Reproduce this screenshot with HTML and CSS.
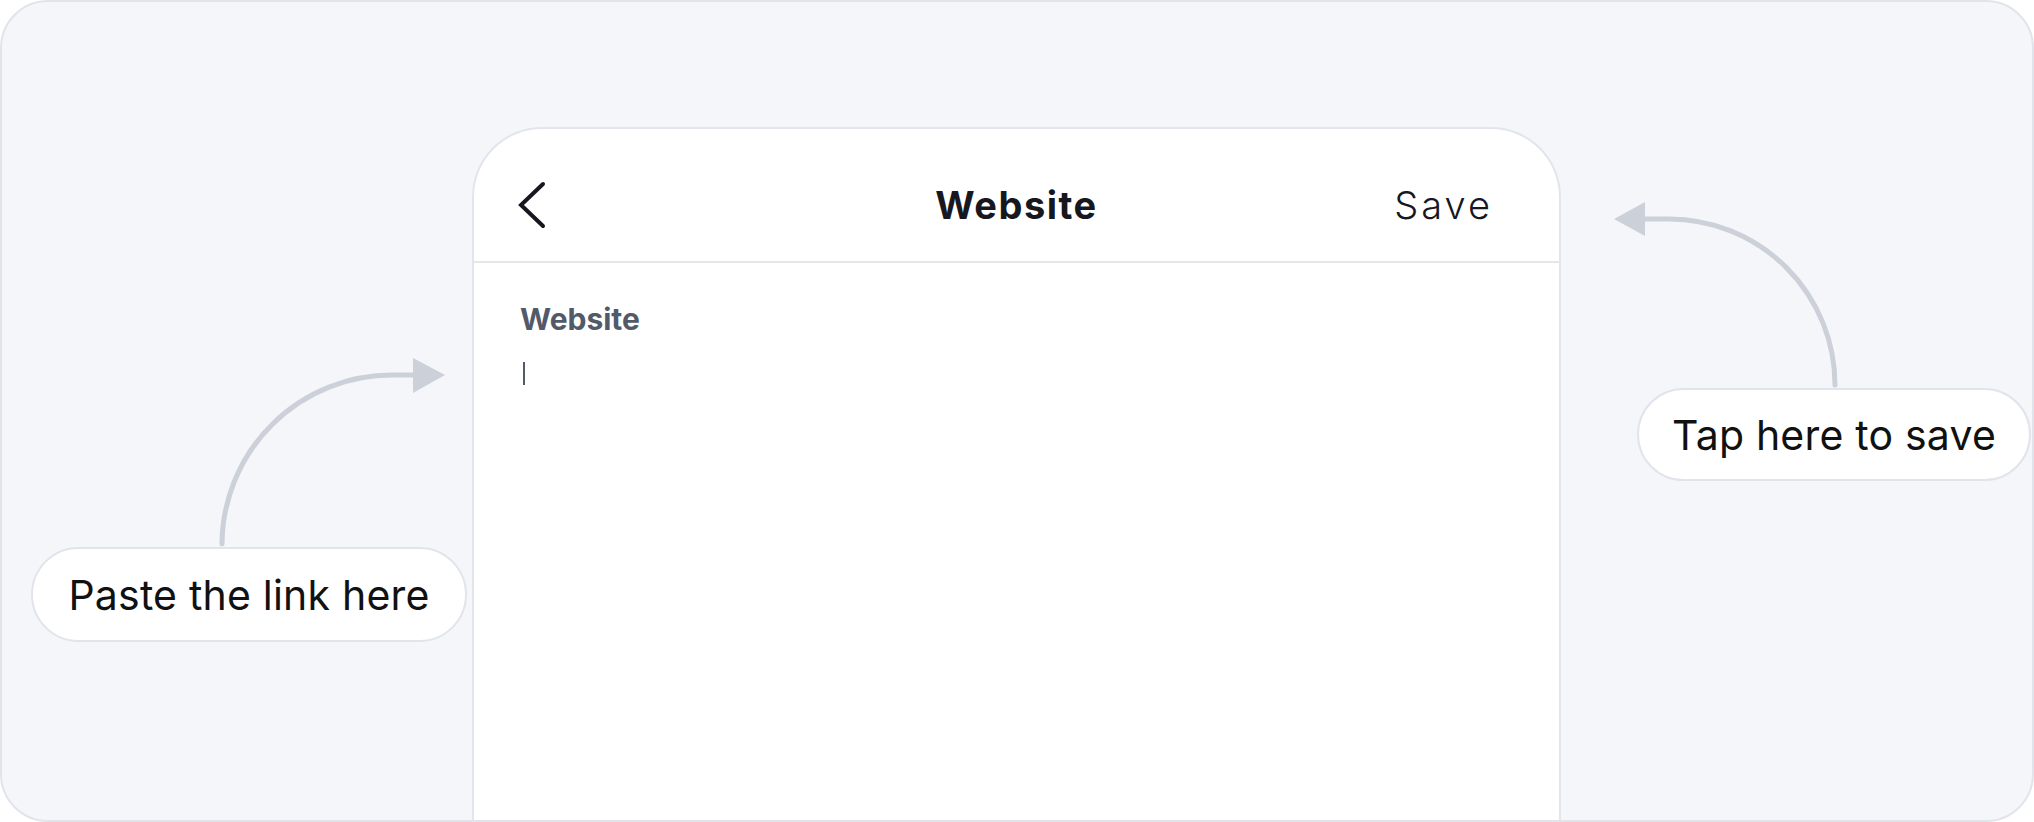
FILE: index.html
```html
<!DOCTYPE html>
<html lang="en">
<head>
  <meta charset="UTF-8" />
  <title>Website</title>
  <link rel="stylesheet" href="styles.css">
</head>
<body>
  <div class="frame">
    <div class="side side-left">
      <svg class="arrow" width="470" height="197" viewBox="0 0 470 197">
        <path d="M220 194 A170 170 0 0 1 390 25 H413" fill="none" stroke="#cbd0d9" stroke-width="5" stroke-linecap="round" />
        <polygon points="411,8 443,25 411,43" fill="#cbd0d9" />
      </svg>
      <div class="pill pill-left">Paste the link here</div>
    </div>

    <div class="phone">
      <div class="phone-header">
        <svg class="back" width="32" height="52" viewBox="0 0 32 52">
          <path d="M27 5 L5 26 L27 47" fill="none" stroke="#17171f" stroke-width="4" stroke-linecap="round" stroke-linejoin="miter" />
        </svg>
        <h2 class="title">Website</h2>
        <span class="save">Save</span>
      </div>
      <div class="phone-body">
        <label class="field-label">Website</label>
        <div class="cursor"></div>
      </div>
    </div>

    <div class="side side-right">
      <svg class="arrow" width="471" height="188" viewBox="0 0 471 188">
        <path d="M82 19 H108 A166 166 0 0 1 274 185" fill="none" stroke="#cbd0d9" stroke-width="5" stroke-linecap="round" />
        <polygon points="84,2 53,19 84,36" fill="#cbd0d9" />
      </svg>
      <div class="pill pill-right">Tap here to save</div>
    </div>
  </div>
</body>
</html>
```

FILE: styles.css
```css
body {
  margin: 0;
  background: #ffffff;
  font-family: 'Inter', 'Liberation Sans', sans-serif;
}

.frame {
  width: 2034px;
  height: 822px;
  box-sizing: border-box;
  border: 2px solid #e2e4ec;
  border-radius: 48px;
  background-color: #f5f6fa;
  overflow: hidden;
  display: flex;
}

.side {
  display: flex;
  flex-direction: column;
}

.side-left {
  width: 470px;
  padding-top: 348px;
}

.side-right {
  flex: 1;
  padding-top: 198px;
}

.arrow {
  display: block;
}

.pill {
  box-sizing: border-box;
  background: #ffffff;
  border: 2px solid #e2e4ec;
  border-radius: 48px;
  display: flex;
  align-items: center;
  justify-content: center;
  font-size: 41px;
  color: #111111;
  letter-spacing: 0.2px;
}

.pill-left {
  margin-left: 29px;
  width: 436px;
  height: 95px;
}

.pill-right {
  margin-left: 76px;
  width: 394px;
  height: 93px;
}

.phone {
  width: 1089px;
  box-sizing: border-box;
  margin-top: 125px;
  background: #ffffff;
  border: 2px solid #e3e5ec;
  border-bottom: none;
  border-radius: 70px 70px 0 0;
}

.phone-header {
  height: 134px;
  box-sizing: border-box;
  padding: 20px 69px 0 69px;
  display: grid;
  grid-template-columns: 1fr auto 1fr;
  align-items: center;
  border-bottom: 2px solid #e4e6ea;
}

.back {
  display: block;
  margin-left: -27px;
}

.title {
  margin: 0;
  font-size: 38px;
  font-weight: 700;
  letter-spacing: 1.5px;
  color: #17171f;
}

.save {
  justify-self: end;
  margin-right: -3px;
  font-size: 38px;
  font-weight: 300;
  letter-spacing: 3px;
  color: #17171f;
}

.phone-body {
  padding: 38px 48px 0 46px;
}

.field-label {
  display: block;
  font-size: 30px;
  font-weight: 700;
  color: #525a69;
}

.cursor {
  width: 2px;
  height: 23px;
  margin-top: 25px;
  margin-left: 3px;
  background: #535a68;
}
```
